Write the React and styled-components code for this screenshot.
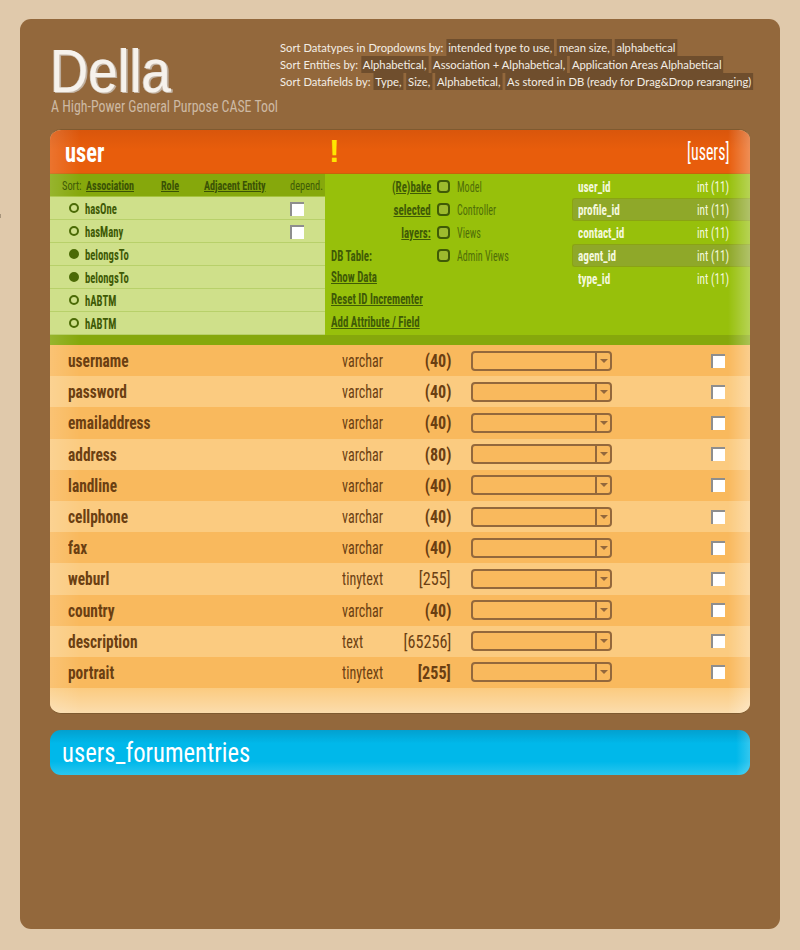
import styled, { createGlobalStyle, css } from "styled-components";

const narrow = `"Liberation Sans Narrow", "Roboto Condensed", "Liberation Sans", sans-serif`;

// the original face is a lot narrower than anything installed
const squeeze = (x, origin = "left") => css`
    display: inline-block;
    white-space: nowrap;
    transform: scaleX(${x});
    transform-origin: ${origin} center;
`

const GlobalStyle = createGlobalStyle`
    html, body {
        margin: 0;
        padding: 0;
        background: #E0C9AB;
    }
    * {
        box-sizing: border-box;
    }
`

const associations = [
    { name: "hasOne", filled: false, depend: true },
    { name: "hasMany", filled: false, depend: true },
    { name: "belongsTo", filled: true },
    { name: "belongsTo", filled: true },
    { name: "hABTM", filled: false },
    { name: "hABTM", filled: false },
];

const foreignKeys = [
    { name: "user_id" },
    { name: "profile_id", active: true },
    { name: "contact_id" },
    { name: "agent_id", active: true },
    { name: "type_id" },
];

const attributes = [
    { name: "username", type: "varchar", size: "(40)" },
    { name: "password", type: "varchar", size: "(40)" },
    { name: "emailaddress", type: "varchar", size: "(40)" },
    { name: "address", type: "varchar", size: "(80)" },
    { name: "landline", type: "varchar", size: "(40)" },
    { name: "cellphone", type: "varchar", size: "(40)" },
    { name: "fax", type: "varchar", size: "(40)" },
    { name: "weburl", type: "tinytext", size: "[255]", light: true },
    { name: "country", type: "varchar", size: "(40)" },
    { name: "description", type: "text", size: "[65256]", light: true },
    { name: "portrait", type: "tinytext", size: "[255]" },
];

function Sentence({ label, items }) {
    return (
        <SortLine>
            {label}
            {items.map((item, i) => (
                <span key={item}> <Chip>{item}{i < items.length - 1 ? "," : ""}</Chip></span>
            ))}
        </SortLine>
    )
}

export default function App() {
    return (
        <>
            <GlobalStyle />
            <EdgeMark />
            <Panel>
                <Masthead>
                    <Brand>
                        <Logo>Della</Logo>
                        <Tagline>A High-Power General Purpose CASE Tool</Tagline>
                    </Brand>
                    <SortOptions>
                        <Sentence label="Sort Datatypes in Dropdowns by:" items={["intended type to use", "mean size", "alphabetical "]} />
                        <Sentence label="Sort Entities by:" items={["Alphabetical", "Association + Alphabetical", "Application Areas Alphabetical"]} />
                        <Sentence label="Sort Datafields by:" items={["Type", "Size", "Alphabetical", "As stored in DB (ready for Drag&Drop rearanging)"]} />
                    </SortOptions>
                </Masthead>

                <Card>
                    <TitleBar>
                        <TitleName>user</TitleName>
                        <Warning>!</Warning>
                        <TableName>[users]</TableName>
                    </TitleBar>

                    <Settings>
                        <AssocPanel>
                            <AssocHead>
                                <SortLabel>Sort:</SortLabel>
                                <SortLink>Association</SortLink>
                                <SortLink>Role</SortLink>
                                <SortLink>Adjacent Entity</SortLink>
                                <SortLabel>depend.</SortLabel>
                            </AssocHead>
                            {associations.map((a, i) => (
                                <AssocRow key={i}>
                                    <Radio $filled={a.filled} />
                                    <AssocName>{a.name}</AssocName>
                                    {a.depend && <AssocCheck />}
                                </AssocRow>
                            ))}
                        </AssocPanel>

                        <ActionPanel>
                            <BakeGrid>
                                <BakeCell><BakeLink>(Re)bake</BakeLink></BakeCell><LayerBox /><LayerName>Model</LayerName>
                                <BakeCell><BakeLink>selected</BakeLink></BakeCell><LayerBox /><LayerName>Controller</LayerName>
                                <BakeCell><BakeLink>layers:</BakeLink></BakeCell><LayerBox /><LayerName>Views</LayerName>
                                <DbLabel>DB Table:</DbLabel><LayerBox /><LayerName>Admin Views</LayerName>
                            </BakeGrid>
                            <ActionLink>Show Data</ActionLink>
                            <ActionLink>Reset ID Incrementer</ActionLink>
                            <ActionLink>Add Attribute / Field</ActionLink>
                        </ActionPanel>

                        <KeyPanel>
                            {foreignKeys.map(k => (
                                <KeyRow key={k.name} $active={k.active}>
                                    <KeyName>{k.name}</KeyName>
                                    <KeyType>int (11)</KeyType>
                                </KeyRow>
                            ))}
                        </KeyPanel>
                    </Settings>
                    <GreenStrip />

                    {attributes.map((a, i) => (
                        <AttrRow key={a.name} $odd={i % 2 === 1}>
                            <NameCell><AttrName>{a.name}</AttrName></NameCell>
                            <TypeCell><AttrType>{a.type}</AttrType></TypeCell>
                            <SizeCell><AttrSize $light={a.light}>{a.size}</AttrSize></SizeCell>
                            <Select><SelectArrow /></Select>
                            <AttrCheck />
                        </AttrRow>
                    ))}
                    <CardFoot />
                </Card>

                <CollapsedCard><CollapsedName>users_forumentries</CollapsedName></CollapsedCard>
            </Panel>
        </>
    )
}

const EdgeMark = styled.div`
    position: absolute;
    left: 0;
    top: 214px;
    width: 1px;
    height: 4px;
    background: #A8957C;
`

const Panel = styled.div`
    width: 760px;
    height: 910px;
    margin: 19px 20px 21px;
    padding: 0 30px;
    background: #93683C;
    border-radius: 11px;
    overflow: hidden;
`

const Masthead = styled.div`
    height: 110px;
    display: flex;
`

const Brand = styled.div`
    width: 230px;
    padding-top: 26px;
`

const Logo = styled.div`
    font-family: "Liberation Sans", sans-serif;
    font-size: 61px;
    line-height: 52px;
    height: 52px;
    color: #F6F2EC;
    text-shadow: 1px 1px 0 #C4B5A5, 2px 1px 0 #BDAD9C, -1px 0 0 #CFC3B6;
    ${squeeze(.87)}
`

const Tagline = styled.div`
    font-family: ${narrow};
    font-size: 17px;
    line-height: 18px;
    color: #CDB9A3;
    margin-left: 1px;
    ${squeeze(.815)}
`

const SortOptions = styled.div`
    padding-top: 20px;
    flex: 1;
`

const SortLine = styled.div`
    font-family: Lato, "Liberation Sans", sans-serif;
    font-size: 12px;
    line-height: 17px;
    color: #F4EEE6;
    white-space: pre;
    ${squeeze(.935)}
    display: block;
`

const Chip = styled.span`
    background: #6F4E2D;
    padding: 1px 2px;
`

const Card = styled.div`
    position: relative;
    width: 700px;
    height: 585px;
    border-radius: 11px;
    overflow: hidden;
    border: 1px solid #7E5A30;
    border-width: 1px 0 1px 0;
    background: #FAD9A6;

    &::before {
        content: "";
        position: absolute;
        inset: 0 auto 0 0;
        width: 30px;
        background: linear-gradient(to right, rgba(255,255,255,.14), rgba(255,255,255,0));
        pointer-events: none;
    }

    &::after {
        content: "";
        position: absolute;
        inset: 0 0 0 auto;
        width: 22px;
        background: linear-gradient(to right, rgba(255,255,255,0), rgba(255,255,255,.3));
        pointer-events: none;
    }
`

const TitleBar = styled.div`
    height: 44px;
    display: flex;
    align-items: center;
    padding: 2px 21px 0 15px;
    background: linear-gradient(to bottom, #D9560C, #E85D0C 45%);
    border-bottom: 1px solid #C9620A;
    font-family: ${narrow};
`

const TitleName = styled.div`
    width: 264px;
    font-size: 27px;
    font-weight: 700;
    color: #FFF;
    ${squeeze(.83)}
`

const Warning = styled.div`
    flex: 1;
    font-family: "Liberation Sans", sans-serif;
    font-size: 32px;
    font-weight: 700;
    color: #FFE600;
    line-height: 30px;
    margin-top: -3px;
`

const TableName = styled.div`
    font-size: 23px;
    color: #FFF;
    ${squeeze(.69, "right")}
`

const Settings = styled.div`
    height: 161px;
    display: flex;
    background: #97C00B;
    font-family: ${narrow};
`

const GreenStrip = styled.div`
    height: 10px;
    background: #86A80C;
`

const AssocPanel = styled.div`
    width: 275px;
    display: flex;
    flex-direction: column;
`

const AssocHead = styled.div`
    height: 23px;
    padding: 1px 0 0 12px;
    display: grid;
    grid-template-columns: 24px 75px 43px 86px 1fr;
    align-items: center;
    background: #86A80C;
    border-bottom: 1px solid #A6C33F;
    font-size: 13px;
`

const SortLabel = styled.span`
    color: #3F5A06;
    ${squeeze(.8)}
`

const SortLink = styled.span`
    color: #3A5205;
    font-weight: 700;
    text-decoration: underline;
    ${squeeze(.78)}
`

const AssocRow = styled.div`
    height: 23px;
    display: flex;
    align-items: center;
    position: relative;
    padding-left: 19px;
    background: #CFE08A;
    border-bottom: 1px solid #B8D06A;
`

const Radio = styled.span`
    width: 10px;
    height: 10px;
    border-radius: 50%;
    border: 2px solid #4B6A06;
    background: ${props => props.$filled ? "#4B6A06" : "transparent"};
    margin-right: 6px;
`

const AssocName = styled.span`
    font-size: 14px;
    font-weight: 700;
    color: #3F5A06;
    margin-top: 2px;
    ${squeeze(.76)}
`

const AssocCheck = styled.span`
    position: absolute;
    left: 240px;
    top: 5px;
    width: 14px;
    height: 14px;
    background: #FFF;
    border-top: 2px solid #8E8E8E;
    border-left: 2px solid #8E8E8E;
`

const ActionPanel = styled.div`
    width: 240px;
    padding: 1px 0 0 6px;
    display: flex;
    flex-direction: column;
    gap: 4.5px;
`

const BakeGrid = styled.div`
    display: grid;
    grid-template-columns: 100px 14px 1fr;
    grid-auto-rows: 23px;
    column-gap: 6px;
    align-items: center;
    margin-bottom: -4px;
`

const BakeCell = styled.div`
    display: flex;
    justify-content: flex-end;
`

const BakeLink = styled.span`
    font-size: 14px;
    font-weight: 700;
    color: #3F5A06;
    text-decoration: underline;
    ${squeeze(.78, "right")}
`

const DbLabel = styled.span`
    font-size: 14px;
    font-weight: 700;
    color: #3F5A06;
    ${squeeze(.78)}
`

const LayerBox = styled.span`
    width: 13px;
    height: 13px;
    border: 2px solid #3F5A06;
    border-radius: 4px;
    background: #9DBA2E;
`

const LayerName = styled.span`
    font-size: 14px;
    color: #4F6E08;
    ${squeeze(.72)}
`

const ActionLink = styled.span`
    align-self: flex-start;
    font-size: 14px;
    font-weight: 700;
    color: #3F5A06;
    line-height: 18px;
    text-decoration: underline;
    ${squeeze(.78)}
`

const KeyPanel = styled.div`
    flex: 1;
    padding: 1px 0 0 13px;
`

const KeyRow = styled.div`
    height: 23px;
    display: flex;
    align-items: center;
    margin-left: ${props => props.$active ? "-6px" : "0"};
    padding-left: ${props => props.$active ? "5px" : "0"};
    background: ${props => props.$active ? "#8FA829" : "transparent"};
    border: ${props => props.$active ? "1px solid #8AA314" : "none"};
    border-right: none;
    border-radius: 3px 0 0 3px;
    color: #F4F8DE;
    font-size: 14px;
`

const KeyName = styled.span`
    width: 119px;
    font-weight: 700;
    ${squeeze(.8)}
`

const KeyType = styled.span`
    ${squeeze(.8)}
`

const AttrRow = styled.div`
    height: 31.2px;
    display: flex;
    align-items: center;
    padding-left: 18px;
    background: ${props => props.$odd ? "#FBCB80" : "#F9B95D"};
    font-family: ${narrow};
    color: #6B3F12;
`

const NameCell = styled.div`
    width: 274px;
`

const AttrName = styled.span`
    font-size: 19px;
    font-weight: 700;
    ${squeeze(.81)}
`

const TypeCell = styled.div`
    width: 60px;
`

const AttrType = styled.span`
    font-size: 18px;
    ${squeeze(.78)}
`

const SizeCell = styled.div`
    width: 49px;
    margin-right: 20px;
    display: flex;
    justify-content: flex-end;
`

const AttrSize = styled.span`
    font-size: 19px;
    font-weight: ${props => props.$light ? 400 : 700};
    ${squeeze(.85, "right")}
`

const Select = styled.div`
    width: 141px;
    height: 20px;
    border: 2px solid #93683C;
    border-radius: 4px;
    background: #F9B95D;
    display: flex;
    justify-content: flex-end;
`

const SelectArrow = styled.div`
    width: 15px;
    border-left: 2px solid #93683C;
    display: flex;
    align-items: center;
    justify-content: center;

    &::before {
        content: "";
        border: 4px solid transparent;
        border-top-color: #93683C;
        border-bottom-width: 0;
    }
`

const AttrCheck = styled.span`
    width: 14px;
    height: 14px;
    margin-left: 99px;
    background: #FFF;
    border-top: 2px solid #8E8E8E;
    border-left: 2px solid #8E8E8E;
`

const CardFoot = styled.div`
    height: 26px;
    background: linear-gradient(to bottom, #FBCB80, #FBDDAE);
`

const CollapsedCard = styled.div`
    position: relative;
    margin-top: 16px;
    width: 700px;
    height: 45px;
    padding-left: 12px;
    border-radius: 11px;
    background: linear-gradient(to bottom, #03A0CF, #00B8EA 30%, #00B8EA 70%, #2AC6EE);
    font-family: ${narrow};
    overflow: hidden;

    &::after {
        content: "";
        position: absolute;
        inset: 0 0 0 auto;
        width: 14px;
        background: linear-gradient(to right, rgba(255,255,255,0), rgba(255,255,255,.2));
    }
`

const CollapsedName = styled.span`
    color: #FFF;
    font-size: 28px;
    line-height: 45px;
    ${squeeze(.88)}
`
